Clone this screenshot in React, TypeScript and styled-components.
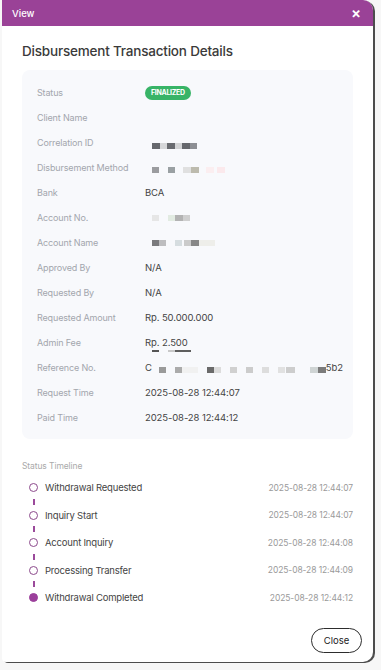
import React from "react";
import styled, { createGlobalStyle } from "styled-components";

const GlobalStyle = createGlobalStyle`
  html, body {
    margin: 0;
    padding: 0;
    background: #f7f7f7;
    font-family: "Inter", "Liberation Sans", sans-serif;
  }
`;

type Block = { c: string; w: number; gap?: number };

type Row = {
  label: string;
  value?: React.ReactNode;
};

const Page = styled.div`
  width: 381px;
  height: 670px;
  padding-left: 2px;
  box-sizing: border-box;
`;

const Modal = styled.div`
  width: 371px;
  height: 662px;
  background: #ffffff;
  border-radius: 0 10px 10px 4px;
  box-shadow: 2px 1px 0 #4d4d4d;
  display: flex;
  flex-direction: column;
  overflow: hidden;
`;

const Header = styled.div`
  height: 26px;
  background: #9a4297;
  color: #fff;
  display: flex;
  align-items: center;
  justify-content: space-between;
  padding: 0 12px 0 10px;
  font-size: 9.5px;
  font-weight: 500;
  flex-shrink: 0;
`;

const CloseX = styled.span`
  font-size: 15px;
  font-weight: 600;
  line-height: 1;
  margin-top: -1px;
`;

const Body = styled.div`
  padding: 15px 20px 0 20px;
  display: flex;
  flex-direction: column;
  flex: 1;
`;

const Title = styled.h2`
  margin: 0 0 9px 0;
  font-size: 13.5px;
  font-weight: 500;
  color: #3a3a3a;
  letter-spacing: -0.2px;
  line-height: 20px;
`;

const Card = styled.div`
  background: #f8f9fc;
  border-radius: 8px;
  padding: 10px 15px 9px;
  display: flex;
  flex-direction: column;
`;

const DetailRow = styled.div`
  height: 25px;
  display: grid;
  grid-template-columns: 108px 1fr;
  align-items: center;
`;

const Label = styled.span`
  font-size: 9px;
  color: #a3a6ad;
  letter-spacing: -0.15px;
`;

const Value = styled.span`
  font-size: 9.5px;
  color: #444;
  letter-spacing: -0.1px;
  display: flex;
  align-items: center;
  position: relative;
`;

const Badge = styled.span`
  background: #38b467;
  color: #fff;
  font-size: 7px;
  font-weight: 700;
  border-radius: 7px;
  padding: 2.5px 6px;
  letter-spacing: -0.3px;
`;

const Pixels = styled.span<{ $top: number }>`
  display: flex;
  align-items: center;
  margin-left: 7px;
  margin-top: ${(p) => p.$top}px;
`;

const Pixel = styled.span<{ $c: string; $w: number; $h: number; $gap: number }>`
  display: inline-block;
  width: ${(p) => p.$w}px;
  height: ${(p) => p.$h}px;
  background: ${(p) => p.$c};
  margin-right: ${(p) => p.$gap}px;
`;

const Underline = styled.span`
  position: absolute;
  left: 7px;
  top: 13px;
  display: flex;
`;

const Section = styled.div`
  margin-top: 22px;
  font-size: 8.5px;
  color: #aaa;
  letter-spacing: -0.1px;
`;

const Timeline = styled.div`
  margin-top: 3px;
  padding-left: 7px;
  display: flex;
  flex-direction: column;
`;

const Step = styled.div`
  height: 27.5px;
  display: flex;
  align-items: center;
  position: relative;
`;

const Dot = styled.span<{ $filled: boolean }>`
  width: 7px;
  height: 7px;
  border-radius: 50%;
  border: 1.3px solid #8c4a8c;
  background: ${(p) => (p.$filled ? "#9b3f9b" : "#fff")};
  border-color: ${(p) => (p.$filled ? "#9b3f9b" : "#8c4a8c")};
  flex-shrink: 0;
`;

const Connector = styled.span`
  position: absolute;
  left: 4px;
  top: -3px;
  width: 2px;
  height: 6px;
  background: #9b4a9b;
`;

const StepName = styled.span`
  margin-left: 7px;
  font-size: 9.5px;
  color: #444;
  letter-spacing: -0.2px;
  flex: 1;
`;

const StepTime = styled.span`
  font-size: 8.5px;
  color: #9a9a9a;
  letter-spacing: -0.1px;
`;

const Footer = styled.div`
  margin-top: auto;
  display: flex;
  justify-content: flex-end;
  padding: 0 11px 9px 0;
`;

const CloseButton = styled.button`
  width: 51px;
  height: 25px;
  border: 1px solid #2d2d2d;
  border-radius: 13px;
  background: #fff;
  font-family: inherit;
  font-size: 9.5px;
  color: #222;
  cursor: pointer;
`;

const Redacted = ({ blocks, top = 3, h = 6 }: { blocks: Block[]; top?: number; h?: number }) => (
  <Pixels $top={top}>
    {blocks.map((b, i) => (
      <Pixel key={i} $c={b.c} $w={b.w} $h={h} $gap={b.gap ?? 0} />
    ))}
  </Pixels>
);

const rows: Row[] = [
  { label: "Status", value: <Badge>FINALIZED</Badge> },
  { label: "Client Name" },
  {
    label: "Correlation ID",
    value: (
      <Redacted
        top={6}
        blocks={[
          { c: "#66686d", w: 8 },
          { c: "#d6d7d9", w: 7 },
          { c: "#696b70", w: 8 },
          { c: "#d3d4d6", w: 7 },
          { c: "#66686d", w: 8 },
          { c: "#8d8f94", w: 7 },
        ]}
      />
    ),
  },
  {
    label: "Disbursement Method",
    value: (
      <Redacted
        top={5}
        blocks={[
          { c: "#9b9c9f", w: 7, gap: 9 },
          { c: "#9aa0a3", w: 7, gap: 8 },
          { c: "#e0e0e0", w: 8 },
          { c: "#bdbbae", w: 8, gap: 7 },
          { c: "#fbeef0", w: 8, gap: 3 },
          { c: "#fbe9ec", w: 8 },
        ]}
      />
    ),
  },
  { label: "Bank", value: "BCA" },
  {
    label: "Account No.",
    value: (
      <Redacted
        top={1}
        blocks={[
          { c: "#e6e6e6", w: 7, gap: 9 },
          { c: "#e2ebe2", w: 7 },
          { c: "#b3b3b3", w: 8 },
          { c: "#cfcfcf", w: 7 },
        ]}
      />
    ),
  },
  {
    label: "Account Name",
    value: (
      <Redacted
        top={1}
        blocks={[
          { c: "#7a7a7d", w: 7 },
          { c: "#bdbdbf", w: 7, gap: 9 },
          { c: "#d6dde0", w: 7, gap: 2 },
          { c: "#cbcbcb", w: 7 },
          { c: "#878787", w: 8 },
          { c: "#eeeeea", w: 16 },
        ]}
      />
    ),
  },
  { label: "Approved By", value: "N/A" },
  { label: "Requested By", value: "N/A" },
  { label: "Requested Amount", value: "Rp. 50.000.000" },
  {
    label: "Admin Fee",
    value: (
      <>
        Rp. 2.500
        <Underline>
          <Pixel $c="#555" $w={7} $h={2} $gap={9} />
          <Pixel $c="#c8c8c8" $w={7} $h={2} $gap={0} />
          <Pixel $c="#5e5e5e" $w={16} $h={2} $gap={0} />
        </Underline>
      </>
    ),
  },
  {
    label: "Reference No.",
    value: (
      <>
        C
        <Redacted
          top={5}
          blocks={[
            { c: "#9a9a9a", w: 7, gap: 9 },
            { c: "#ababab", w: 7 },
            { c: "#f1f1f1", w: 16, gap: 9 },
            { c: "#6a6a6a", w: 7 },
            { c: "#dcdcdc", w: 7, gap: 9 },
            { c: "#d0d0d0", w: 7, gap: 9 },
            { c: "#cccccc", w: 7, gap: 9 },
            { c: "#dddddd", w: 7, gap: 9 },
            { c: "#e1e1e1", w: 7, gap: 1 },
            { c: "#cdcdcd", w: 9, gap: 15 },
            { c: "#cfd4d4", w: 8 },
            { c: "#7b7b7b", w: 8 },
          ]}
        />
        <span>5b2</span>
      </>
    ),
  },
  { label: "Request Time", value: "2025-08-28 12:44:07" },
  { label: "Paid Time", value: "2025-08-28 12:44:12" },
];

const steps = [
  { name: "Withdrawal Requested", time: "2025-08-28 12:44:07" },
  { name: "Inquiry Start", time: "2025-08-28 12:44:07" },
  { name: "Account Inquiry", time: "2025-08-28 12:44:08" },
  { name: "Processing Transfer", time: "2025-08-28 12:44:09" },
  { name: "Withdrawal Completed", time: "2025-08-28 12:44:12" },
];

export default function App() {
  return (
    <Page>
      <GlobalStyle />
      <Modal>
        <Header>
          <span>View</span>
          <CloseX>×</CloseX>
        </Header>
        <Body>
          <Title>Disbursement Transaction Details</Title>
          <Card>
            {rows.map((row) => (
              <DetailRow key={row.label}>
                <Label>{row.label}</Label>
                <Value>{row.value}</Value>
              </DetailRow>
            ))}
          </Card>
          <Section>Status Timeline</Section>
          <Timeline>
            {steps.map((step, idx) => (
              <Step key={step.name}>
                {idx > 0 && <Connector />}
                <Dot $filled={idx === steps.length - 1} />
                <StepName>{step.name}</StepName>
                <StepTime>{step.time}</StepTime>
              </Step>
            ))}
          </Timeline>
        </Body>
        <Footer>
          <CloseButton>Close</CloseButton>
        </Footer>
      </Modal>
    </Page>
  );
}
